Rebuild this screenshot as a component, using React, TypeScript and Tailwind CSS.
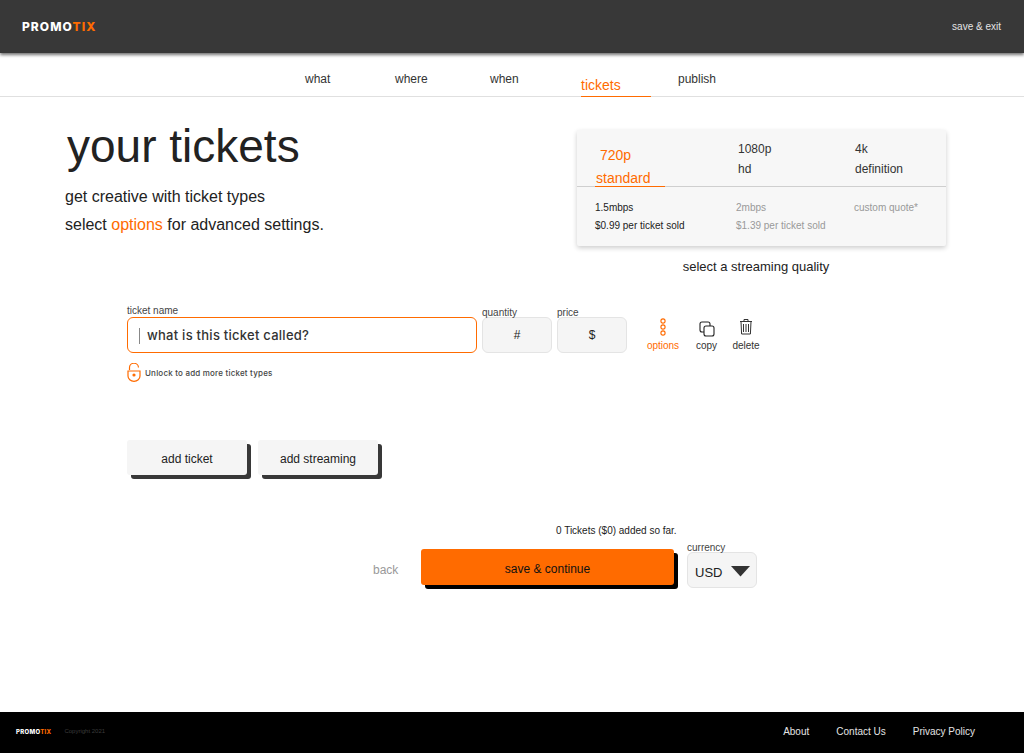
import React from "react";

const sans = "font-['Liberation_Sans',Arial,sans-serif]";

function Logo({ className }: { className: string }) {
  return (
    <div className={`font-['Inter',sans-serif] font-extrabold text-white ${className}`}>
      PROMO<span className="text-[#ff6b00]">TIX</span>
    </div>
  );
}

function NavItem({ label, active, className }: { label: string; active?: boolean; className: string }) {
  return active ? (
    <div className={`relative z-10 flex h-[44px] flex-col justify-end ${className}`}>
      <span className="border-b border-[#ff6b00] pb-[3px] text-[14px] leading-[16px] text-[#ff6b00]">{label}</span>
    </div>
  ) : (
    <div className={`pt-[18px] text-[12px] leading-[16px] text-[#333] ${className}`}>{label}</div>
  );
}

function Trash() {
  return (
    <svg width="14" height="17" viewBox="0 0 14 17" fill="none" stroke="#333" strokeWidth="1">
      <path d="M1 3.5h12M5 3.5V1.5h4v2M2 3.5l.6 12.5h8.8L12 3.5M4.5 6v8M7 6v8M9.5 6v8" />
    </svg>
  );
}

function Copy() {
  return (
    <svg width="16" height="16" viewBox="0 0 16 16" fill="none" stroke="#222" strokeWidth="1.1">
      <rect x="1" y="1" width="10" height="10" rx="2" />
      <rect x="5" y="5" width="10" height="10" rx="2" fill="#fff" />
    </svg>
  );
}

function Dots() {
  return (
    <svg width="8" height="18" viewBox="0 0 8 18" fill="none" stroke="#ff6b00" strokeWidth="1.1">
      <circle cx="4" cy="3" r="2.1" />
      <circle cx="4" cy="9" r="2.1" />
      <circle cx="4" cy="15" r="2.1" />
    </svg>
  );
}

function Lock() {
  return (
    <svg width="14" height="19" viewBox="0 0 14 19" fill="none" stroke="#ff6b00" strokeWidth="1.2">
      <path d="M2.5 7V5a4.5 4.5 0 0 1 9 -0.5" />
      <path d="M1 8h12v5a6 5.4 0 0 1-12 0z" />
      <circle cx="7" cy="12" r="1" fill="#ff6b00" />
    </svg>
  );
}

export default function App() {
  return (
    <div className={`flex h-[753px] flex-col overflow-hidden bg-white ${sans}`}>
      <header className="z-10 flex h-[53px] shrink-0 items-center justify-between bg-[#383838] pl-[22px] pr-[23px] shadow-[0_2px_3px_rgba(0,0,0,0.55)]">
        <Logo className="mt-[1px] text-[12px] leading-none tracking-[1.05px]" />
        <div className="text-[10px] text-[#e4e4e4]">save &amp; exit</div>
      </header>

      <nav className="relative flex h-[44px] shrink-0 border-b border-[#e0e0e0] pl-[305px]">
        <NavItem label="what" className="w-[90px]" />
        <NavItem label="where" className="w-[95px]" />
        <NavItem label="when" className="w-[91px]" />
        <NavItem label="tickets" active className="w-[70px]" />
        <NavItem label="publish" className="ml-[27px]" />
      </nav>

      <main className="flex-1">
        <section className="flex pl-[65px] pt-[33px]">
          <div className="w-[512px]">
            <h1 className="ml-[2px] text-[46px] font-normal leading-[32px] text-[#222]">your tickets</h1>
            <p className="mt-[21px] text-[16px] leading-[28px] text-[#222]">get creative with ticket types</p>
            <p className="text-[16px] leading-[28px] text-[#222]">
              select <span className="text-[#ff6b00]">options</span> for advanced settings.
            </p>
          </div>
          <div className="w-[369px]">
            <div className="h-[116px] rounded-[2px] bg-[#f7f7f7] shadow-[0_2px_5px_rgba(0,0,0,0.2)]">
              <div className="flex h-[57px] border-b border-[#cfcfcf] text-[12px] leading-[20px] text-[#333]">
                <div className="-mb-px ml-[18px] flex w-[70px] flex-col border-b border-[#ff6b00] pl-[1px] text-[14px] text-[#ff6b00]">
                  <span className="ml-[4px] mt-[15px]">720p</span>
                  <span className="mt-[4px] leading-[18px]">standard</span>
                </div>
                <div className="ml-[73px] w-[117px] pt-[9px]">1080p<br />hd</div>
                <div className="pt-[9px]">4k<br />definition</div>
              </div>
              <div className="flex pt-[12px] text-[10px] leading-[18px] text-[#999]">
                <div className="ml-[18px] w-[141px] text-[#222]">1.5mbps<br />$0.99 per ticket sold</div>
                <div className="w-[118px]">2mbps<br />$1.39 per ticket sold</div>
                <div>custom quote*</div>
              </div>
            </div>
            <p className="ml-[-11px] mt-[14px] text-center text-[13px] leading-[14px] text-[#222]">select a streaming quality</p>
          </div>
        </section>

        <section className="ml-[127px] mt-[30px] flex items-start">
          <div className="w-[350px]">
            <div className="pt-px text-[10px] leading-[12px] text-[#444]">ticket name</div>
            <div className="flex h-[36px] items-center rounded-[6px] border border-[#ff6b00] bg-white pl-[11px] pt-[2px] font-['Inter',sans-serif] text-[13px] font-medium tracking-[0.25px] text-[#333]">
              <span className="mr-[7px] h-[16px] w-px bg-[#888]" />
              what is this ticket called?
            </div>
            <div className="mt-[10px] flex items-center gap-[4px]">
              <Lock />
              <span className="font-['Inter',sans-serif] text-[8px] font-medium tracking-[0.2px] text-[#444]">Unlock to add more ticket types</span>
            </div>
          </div>
          <div className="ml-[5px] w-[70px] pt-[4px]">
            <div className="text-[10px] leading-[10px] text-[#444]">quantity</div>
            <div className="-mt-px flex h-[36px] items-center justify-center rounded-[6px] border border-[#e4e4e4] bg-[#f5f5f5] text-[12px] text-[#222]">#</div>
          </div>
          <div className="ml-[5px] w-[70px] pt-[4px]">
            <div className="text-[10px] leading-[10px] text-[#444]">price</div>
            <div className="-mt-px flex h-[36px] items-center justify-center rounded-[6px] border border-[#e4e4e4] bg-[#f5f5f5] text-[12px] text-[#222]">$</div>
          </div>
          <div className="ml-[20px] mt-[14px] flex h-[33px] w-[32px] flex-col items-center justify-between text-[10px] leading-[11px] text-[#ff6b00]">
            <Dots />
            <span>options</span>
          </div>
          <div className="ml-[11px] mt-[14px] flex h-[33px] w-[32px] flex-col items-center justify-between pl-[1px] pt-[3px] text-[10px] leading-[11px] text-[#333]">
            <Copy />
            <span>copy</span>
          </div>
          <div className="ml-[8px] mt-[14px] flex h-[33px] w-[32px] flex-col items-center justify-between text-[10px] leading-[11px] text-[#333]">
            <Trash />
            <span>delete</span>
          </div>
        </section>

        <section className="ml-[127px] mt-[58px] flex gap-[11px]">
          <button className="h-[35px] w-[120px] rounded-[3px] bg-[#f5f5f5] pt-[2px] text-[12px] text-[#222] shadow-[4px_4px_0_#383838]">add ticket</button>
          <button className="h-[35px] w-[120px] rounded-[3px] bg-[#f5f5f5] pt-[2px] text-[12px] text-[#222] shadow-[4px_4px_0_#383838]">add streaming</button>
        </section>

        <p className="ml-[556px] mt-[50px] text-[10px] leading-[12px] text-[#222]">0 Tickets ($0) added so far.</p>

        <section className="ml-[373px] mt-[5px] flex items-start">
          <div className="mt-[13px] w-[48px] pt-[7px] text-[12px] leading-[16px] text-[#999]">back</div>
          <button className="mt-[7px] h-[36px] w-[253px] rounded-[3px] bg-[#ff6b00] pt-[3px] text-[12px] text-[#111] shadow-[4px_4px_0_#000]">save &amp; continue</button>
          <div className="ml-[13px] w-[70px]">
            <div className="text-[10px] leading-[12px] text-[#444]">currency</div>
            <div className="-mt-[2px] flex h-[36px] rounded-[6px] border border-[#e4e4e4] bg-[#f5f5f5] pl-[7px]">
              <span className="mt-[12px] text-[13px] leading-[16px] text-[#222]">USD</span>
              <svg className="ml-[9px] mt-[13px]" width="19" height="11" viewBox="0 0 19 11"><path d="M0 0h19L9.5 10.5z" fill="#333" /></svg>
            </div>
          </div>
        </section>
      </main>

      <footer className="flex h-[41px] shrink-0 items-center bg-black pb-[2px] pl-[16px] pr-[49px]">
        <Logo className="text-[6px] leading-none tracking-[0.3px]" />
        <span className="ml-[13px] text-[6px] text-[#3c3c3c]">Copyright 2021</span>
        <div className="ml-auto flex gap-[27px] text-[10px] text-[#e4e4e4]">
          <span>About</span>
          <span>Contact Us</span>
          <span>Privacy Policy</span>
        </div>
      </footer>
    </div>
  );
}
